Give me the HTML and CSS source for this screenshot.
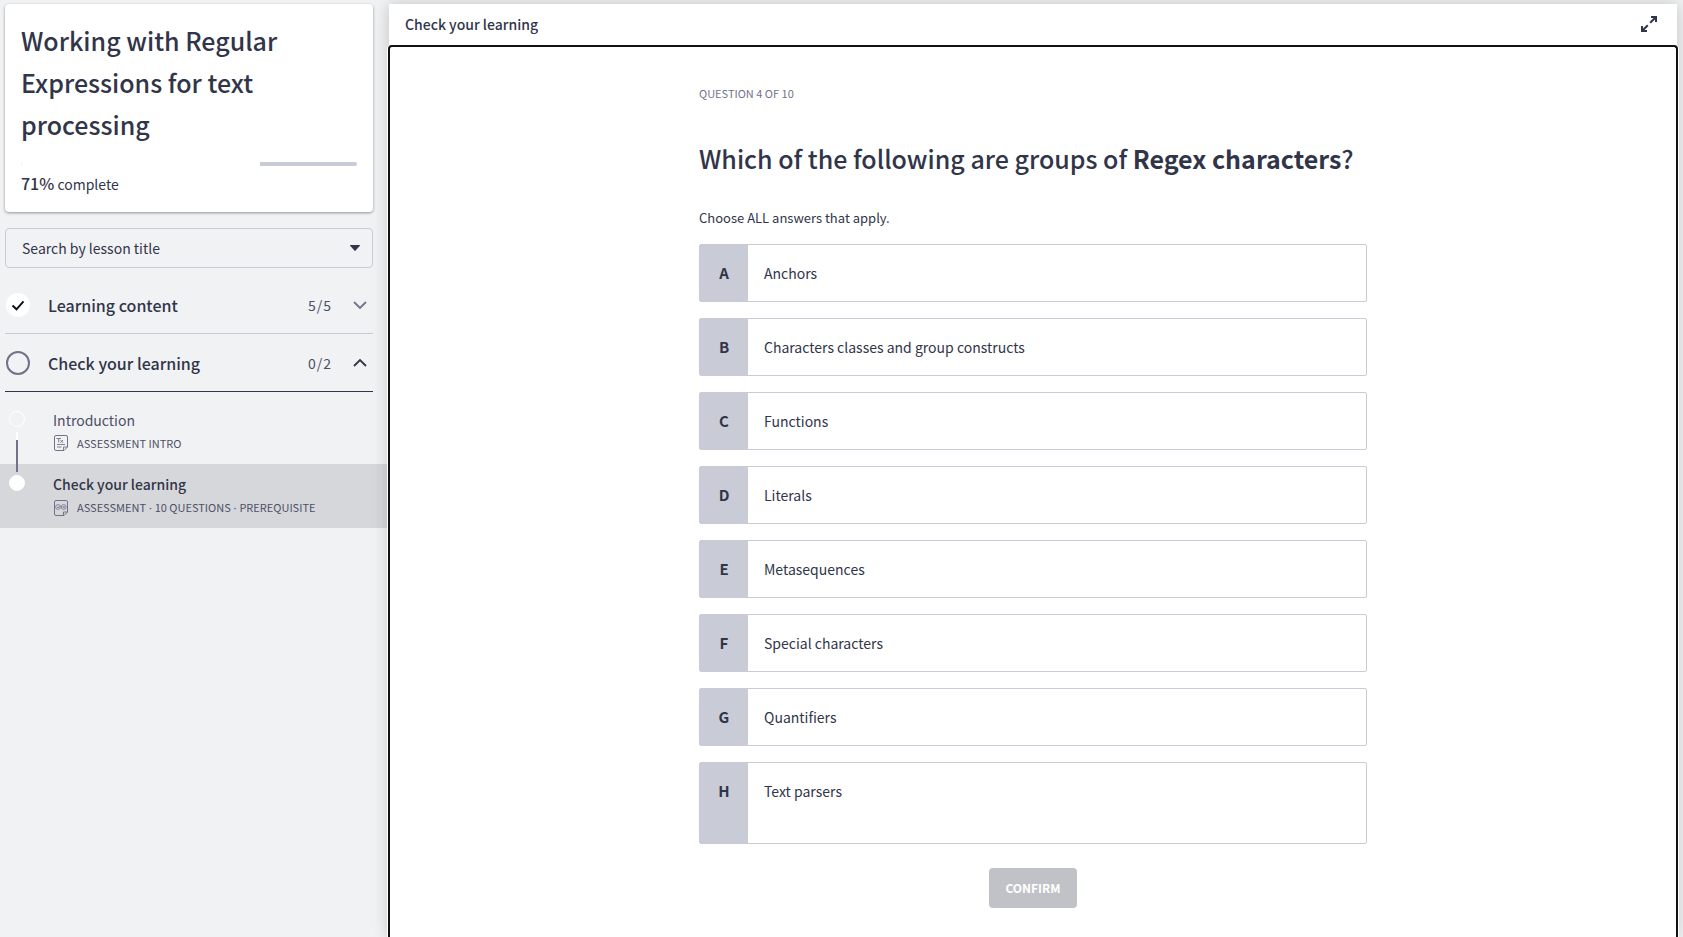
FILE: index.html
```html
<!DOCTYPE html>
<html lang="en">
<head>
<meta charset="utf-8">
<title>Check your learning</title>
<link rel="stylesheet" href="styles.css">
</head>
<body>
<div class="app">
  <aside class="sidebar">
    <section class="course-card">
      <h1 class="course-title">Working with Regular Expressions for text processing</h1>
      <div class="progress" role="progressbar" aria-label="Course progress" aria-valuenow="71" aria-valuemin="0" aria-valuemax="100">
        <div class="progress-done" style="width: 71%"></div>
      </div>
      <p class="progress-text"><strong>71%</strong> complete</p>
    </section>

    <div class="search">
      <select class="search-select" aria-label="Search by lesson title">
        <option>Search by lesson title</option>
      </select>
      <svg class="search-caret" width="10" height="6" viewBox="0 0 10 6" aria-hidden="true"><path d="M0.5 0h9a.5.5 0 0 1 .4.8L5.6 5.6a.8.8 0 0 1-1.200 0L.1.8A.5.5 0 0 1 .5 0z" fill="#313549"/></svg>
    </div>

    <nav class="outline">
      <button class="section" type="button" aria-expanded="false">
        <svg class="section-status" viewBox="0 0 24 24" aria-hidden="true"><circle cx="12" cy="12" r="12" fill="#fff"/><path d="M6.500 12.500l4 3.800 7-8" fill="none" stroke="#111" stroke-width="2"/></svg>
        <span class="section-name">Learning content</span>
        <span class="section-count">5/5</span>
        <svg class="chevron" viewBox="0 0 14 14" aria-hidden="true"><path d="M1 4l6 6 6-6" fill="none" stroke="#707388" stroke-width="1.800"/></svg>
      </button>
      <button class="section section-open" type="button" aria-expanded="true">
        <svg class="section-status" viewBox="0 0 24 24" aria-hidden="true"><circle cx="12" cy="12" r="11" fill="none" stroke="#707388" stroke-width="2"/></svg>
        <span class="section-name">Check your learning</span>
        <span class="section-count">0/2</span>
        <svg class="chevron" viewBox="0 0 14 14" aria-hidden="true"><path d="M1 10l6-6 6 6" fill="none" stroke="#313549" stroke-width="1.800"/></svg>
      </button>

      <ul class="lessons">
        <li>
          <a class="lesson" href="#introduction">
            <span class="lesson-rail"><span class="dot"></span><span class="rail-line"></span></span>
            <span class="lesson-body">
              <span class="lesson-name">Introduction</span>
              <span class="lesson-meta">
                <svg class="lesson-icon" viewBox="0 0 14 16" fill="none" stroke="#707388" aria-hidden="true"><path d="M2 .5h10a1.500 1.500 0 0 1 1.500 1.500V12L10 15.500H2A1.500 1.500 0 0 1 .5 14V2A1.500 1.500 0 0 1 2 .5z"/><path d="M9.500 15.500V12h4M2.500 3.500H7M4.700 3.500v4M6.500 5l2.500 2.800M9 5L6.500 7.800M3 9.500h8M3 12h4.500" stroke-width=".9"/></svg>
                <span>ASSESSMENT INTRO</span>
              </span>
            </span>
          </a>
        </li>
        <li>
          <a class="lesson lesson-current" href="#check" aria-current="page">
            <span class="lesson-rail"><span class="dot dot-full"></span></span>
            <span class="lesson-body">
              <span class="lesson-name">Check your learning</span>
              <span class="lesson-meta">
                <svg class="lesson-icon" viewBox="0 0 14 16" fill="none" stroke="#707388" aria-hidden="true"><path d="M2 .5h10a1.500 1.500 0 0 1 1.500 1.500V12L10 15.500H2A1.500 1.500 0 0 1 .5 14V2A1.500 1.500 0 0 1 2 .5z"/><path d="M9.500 15.500V12h4"/><g stroke-width=".8"><circle cx="4" cy="7" r="2.400"/><circle cx="9.700" cy="7" r="2.400"/><path d="M3 7l1 1 2-2.500M8.700 6l2 2M10.700 6l-2 2"/></g></svg>
                <span>ASSESSMENT<span class="sep"> · </span>10 QUESTIONS<span class="sep"> · </span>PREREQUISITE</span>
              </span>
            </span>
          </a>
        </li>
      </ul>
    </nav>
  </aside>

  <main class="main">
    <header class="topbar">
      <h2 class="topbar-title">Check your learning</h2>
      <button class="expand" type="button" aria-label="Full screen">
        <svg width="16" height="16" viewBox="0 0 16 16" fill="none" stroke="#313549" stroke-width="2" aria-hidden="true"><path d="M10 1h5v5M15 1L9.200 6.800M6 15H1v-5M1 15l5.800-5.800"/></svg>
      </button>
    </header>
    <div class="frame">
      <form class="quiz">
        <p class="quiz-step">QUESTION 4 OF 10</p>
        <h3 class="quiz-question">Which of the following are groups of <strong>Regex characters</strong>?</h3>
        <p class="quiz-hint">Choose ALL answers that apply.</p>
        <div class="options">
          <label class="option"><input class="option-input" type="checkbox"><span class="option-key">A</span><span class="option-text">Anchors</span></label>
          <label class="option"><input class="option-input" type="checkbox"><span class="option-key">B</span><span class="option-text">Characters classes and group constructs</span></label>
          <label class="option"><input class="option-input" type="checkbox"><span class="option-key">C</span><span class="option-text">Functions</span></label>
          <label class="option"><input class="option-input" type="checkbox"><span class="option-key">D</span><span class="option-text">Literals</span></label>
          <label class="option"><input class="option-input" type="checkbox"><span class="option-key">E</span><span class="option-text">Metasequences</span></label>
          <label class="option"><input class="option-input" type="checkbox"><span class="option-key">F</span><span class="option-text">Special characters</span></label>
          <label class="option"><input class="option-input" type="checkbox"><span class="option-key">G</span><span class="option-text">Quantifiers</span></label>
          <label class="option"><input class="option-input" type="checkbox"><span class="option-key">H</span><span class="option-text">Text parsers<br><br></span></label>
        </div>
        <button class="confirm" type="submit" disabled>CONFIRM</button>
      </form>
    </div>
  </main>
</div>
</body>
</html>
```

FILE: styles.css
```css
* {
  box-sizing: border-box;
}

body {
  margin: 0;
  background: #f1f2f4;
  color: #313549;
  font-family: "Source Sans Pro", "Noto Sans CJK SC", sans-serif;
  font-size: 14px;
  line-height: 24px;
}

h1, h2, h3, p, ul {
  margin: 0;
  padding: 0;
}

button, select, input {
  color: inherit;
  font: inherit;
}

.app {
  display: flex;
  height: 100vh;
  overflow: hidden;
  padding: 4px 6px 0 0;
}

/* Sidebar */
.sidebar {
  flex: none;
  width: 389px;
}

.course-card {
  margin: 0 16px 16px 5px;
  padding: 15px 16px 16px;
  border-radius: 4px;
  background: #fff;
  box-shadow: 0 1px 3px rgba(0, 0, 0, 0.4);
}

.course-title {
  font-size: 25px;
  font-weight: 500;
  line-height: 42px;
}

.progress {
  height: 4px;
  margin: 17px 0 6px;
  border-radius: 2px;
  background: #c9cbd6;
  overflow: hidden;
}

.progress-done {
  height: 100%;
  background: #fff;
}

.progress-text strong {
  font-size: 16px;
  font-weight: 500;
  line-height: 16px;
}

.search {
  position: relative;
  margin: 0 16px 8px 5px;
}

.search-select {
  display: block;
  width: 100%;
  height: 40px;
  padding: 0 40px 0 16px;
  border: 1px solid #c9cbd6;
  border-radius: 4px;
  background: transparent;
  appearance: none;
}

.search-caret {
  position: absolute;
  top: 17px;
  right: 13px;
  pointer-events: none;
}

.section {
  display: flex;
  align-items: center;
  width: calc(100% - 21px);
  height: 58px;
  margin: 0 16px 0 5px;
  padding: 0 6px 0 1px;
  border: 0;
  border-bottom: 1px solid #c9cbd6;
  background: none;
  text-align: left;
}

.section-open {
  border-bottom-color: #313549;
}

.section-status {
  flex: none;
  width: 24px;
  height: 24px;
  margin-right: 18px;
}

.section-name {
  flex: 1;
  font-size: 16px;
  font-weight: 500;
}

.section-count {
  margin-right: 21px;
  color: #4c5066;
  letter-spacing: 1px;
}

.chevron {
  width: 14px;
  height: 14px;
}

.lessons {
  margin-top: 8px;
  list-style: none;
}

.lesson {
  display: flex;
  height: 64px;
  margin-right: 1px;
  padding: 8px 0 0 9px;
  color: #4c5066;
  text-decoration: none;
}

.lesson-current {
  background: #d6d7db;
}

.lesson-rail {
  display: flex;
  flex: none;
  flex-direction: column;
  align-items: center;
  width: 16px;
  margin-right: 28px;
  padding-top: 3px;
}

.dot {
  flex: none;
  width: 16px;
  height: 16px;
  border: 1px solid #fff;
  border-radius: 50%;
}

.dot-full {
  background: #fff;
}

.rail-line {
  z-index: 1;
  flex: none;
  width: 2px;
  height: 40px;
  margin-top: 5px;
  background: linear-gradient(#fff 8px, #707388 8px);
}

.lesson-body {
  display: flex;
  flex-direction: column;
}

.lesson-current .lesson-name {
  color: #313549;
  font-weight: 500;
}

.lesson-meta {
  display: flex;
  align-items: center;
  gap: 9px;
  font-size: 11px;
  line-height: 22px;
}

.lesson-icon {
  width: 14px;
  height: 16px;
  margin-left: 1px;
}

.sep {
  font-family: "Noto Sans", sans-serif;
}

/* Main panel */
.main {
  display: flex;
  flex: 1;
  flex-direction: column;
  z-index: 1;
  background: #fff;
  box-shadow: 0 0 16px rgba(0, 0, 0, 0.2);
}

.topbar {
  display: flex;
  flex: none;
  align-items: center;
  justify-content: space-between;
  height: 41px;
  padding: 0 20px 2px 16px;
}

.topbar-title {
  font-size: 14px;
  font-weight: 500;
}

.expand {
  display: flex;
  padding: 0;
  border: 0;
  background: none;
}

.frame {
  flex: 1;
  margin: 0 -1px;
  border: 2px solid #111;
  border-bottom: 0;
  border-radius: 4px 4px 0 0;
  background: #fff;
  box-shadow: 0 0 0 1px #fff;
}

.quiz {
  display: flex;
  flex-direction: column;
  max-width: 668px;
  margin: 0 auto;
  padding-top: 34px;
}

.quiz-step {
  color: #707388;
  font-size: 11px;
}

.quiz-question {
  margin: 32px 0 27px;
  font-size: 25px;
  font-weight: 500;
  line-height: 42px;
}

.quiz-question strong {
  font-weight: 700;
}

.quiz-hint {
  margin-bottom: 14px;
  font-size: 13px;
}

.options {
  display: flex;
  flex-direction: column;
  gap: 16px;
}

.option {
  display: flex;
  border: 1px solid #c9cbd6;
  border-radius: 2px;
}

.option-input {
  position: absolute;
  opacity: 0;
}

.option-key {
  width: 48px;
  padding: 16px 0;
  background: #c9cbd6;
  font-size: 15px;
  font-weight: 700;
  text-align: center;
}

.option-text {
  padding: 16px;
}

.confirm {
  align-self: center;
  height: 40px;
  margin-top: 24px;
  padding: 0 16px;
  border: 0;
  border-radius: 4px;
  background: #c1c2c8;
  color: #fff;
  font-size: 12px;
  font-weight: 700;
}
```
